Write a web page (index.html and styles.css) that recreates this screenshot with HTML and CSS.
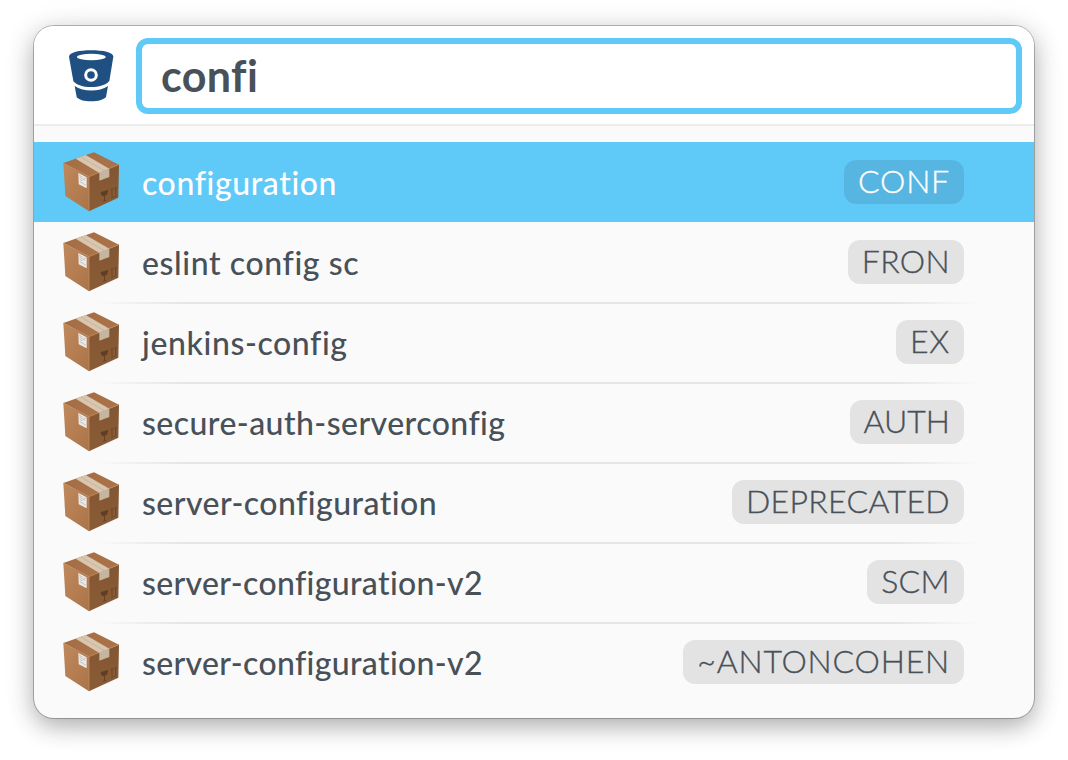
FILE: index.html
```html
<!DOCTYPE html>
<html lang="en">
<head>
<meta charset="utf-8">
<title>Repository search</title>
<link rel="stylesheet" href="styles.css">
</head>
<body>
<svg class="defs" width="0" height="0" aria-hidden="true">
  <defs>
    <linearGradient id="left" x1="0" y1="0" x2="1" y2="1"><stop offset="0" stop-color="#c0895c"/><stop offset="1" stop-color="#aa7449"/></linearGradient>
    <linearGradient id="right" x1="0" y1="0" x2="0" y2="1"><stop offset="0" stop-color="#835632"/><stop offset="1" stop-color="#8a5c36"/></linearGradient>
    <linearGradient id="top" x1="0" y1="0" x2="1" y2="1"><stop offset="0" stop-color="#a36c42"/><stop offset="1" stop-color="#ac754b"/></linearGradient>
    <symbol id="box" viewBox="186 30 174 186">
      <path fill="url(#left)" d="M190 69L267 109V214L196 168Z"/>
      <path fill="url(#right)" d="M267 109L357 74L355 173L267 214Z"/>
      <path fill="url(#top)" d="M190 69L282 37L357 74L267 110Z"/>
      <path fill="none" stroke="#c39167" stroke-width="2" d="M191 70L267 110L356 74M267 110V211"/>
      <path fill="#d8c6b0" d="M227 56L257 45L328 86L298 99Z"/>
      <path fill="none" stroke="#c2ab90" stroke-width="2" d="M242 51L313 92"/>
      <path fill="#c6b5a0" d="M298 98L328 86V111L298 122Z"/>
      <path fill="#ecebe8" d="M235 99L260 112V145L236 133Z"/>
      <path fill="none" stroke="#adaeae" stroke-width="2" d="M238 106L247 111M238 112L256 121M239 119L248 123M239 125L257 135M251 113L257 116"/>
      <path fill="#5f3e25" d="M302 157L324 149Q324 164 314.500 168V180L320 181L308 186L312 181V169Q303 169 302 157Z"/>
      <path fill="none" stroke="#664429" stroke-width="2.500" d="M333 174L350 167M336 169V146M347 165V142M333 150L336 145L339 148M344 146L347 141L350 144"/>
    </symbol>
  </defs>
</svg>
<main class="window">
  <header class="header">
    <svg class="logo" viewBox="144 117 141 159" aria-hidden="true">
      <path fill="#205081" d="M147 140C148 127 178 121 214 121S279 127 280 140L268 213C257 225 237 231 213 231S170 225 160 213Z"/>
      <ellipse cx="214" cy="141" rx="43" ry="9.500" fill="#fff"/>
      <circle cx="213" cy="195" r="16" fill="none" stroke="#fff" stroke-width="9"/>
      <path fill="#205081" d="M164 228C190 246 238 246 264 228L258 261C251 269 234 274 213 274S176 269 170 261Z"/>
    </svg>
    <div class="search">confi</div>
  </header>
  <ul class="results">
    <li class="row selected"><svg class="box"><use href="#box"/></svg><span class="name">configuration</span><span class="tag wide">CONF</span></li>
    <li class="row"><svg class="box"><use href="#box"/></svg><span class="name">eslint config sc</span><span class="tag loose">FRON</span></li>
    <li class="row ruled"><svg class="box"><use href="#box"/></svg><span class="name">jenkins-config</span><span class="tag wide">EX</span></li>
    <li class="row ruled"><svg class="box"><use href="#box"/></svg><span class="name snug">secure-auth-serverconfig</span><span class="tag">AUTH</span></li>
    <li class="row ruled"><svg class="box"><use href="#box"/></svg><span class="name snug">server-configuration</span><span class="tag loose">DEPRECATED</span></li>
    <li class="row ruled"><svg class="box"><use href="#box"/></svg><span class="name tight">server-configuration-v2</span><span class="tag loose">SCM</span></li>
    <li class="row ruled"><svg class="box"><use href="#box"/></svg><span class="name tight">server-configuration-v2</span><span class="tag wide">~ANTONCOHEN</span></li>
  </ul>
</main>
</body>
</html>
```
FILE: styles.css
```css
* { box-sizing: border-box; }
body {
  margin: 0;
  padding: 26px 34px 0;
  height: 760px;
  overflow: hidden;
  background: #fff;
  color: #485058;
  font-family: Lato, "Open Sans", sans-serif;
}
.defs { display: block; }
.window {
  width: 1000px;
  height: 692px;
  border-radius: 20px;
  overflow: hidden;
  background: #fafafa;
  box-shadow: 0 0 0 1px rgba(0,0,0,.25), 0 8px 24px rgba(0,0,0,.3), 0 2px 40px rgba(0,0,0,.06);
}
.header {
  display: flex;
  align-items: flex-start;
  height: 100px;
  padding: 12px 12px 0 34px;
  background: #fff;
  border-bottom: 2px solid #ececec;
}
.logo { width: 47px; height: 53px; margin: 11px 21px 0 0; }
.search {
  flex: 1;
  height: 76px;
  padding-left: 19px;
  border: 6px solid #5fc9f8;
  border-radius: 12px;
  font-size: 43px;
  font-weight: 700;
  line-height: 64px;
  letter-spacing: .4px;
  font-variant-ligatures: none;
}
.results { list-style: none; margin: 0; padding: 16px 0 0; }
.row {
  display: flex;
  align-items: flex-start;
  height: 80px;
  padding: 0 70px 0 28px;
}
.selected { background: #5fc9f8; }
.selected .name, .selected .tag { color: #fff; }
.ruled {
  background: linear-gradient(90deg, transparent 60px, #e5e5e5 150px, #e5e5e5 860px, transparent 945px) 0 0 / 100% 2px no-repeat;
}
.box { width: 58px; height: 62px; margin: 8px 22px 0 0; }
.name {
  flex: 1;
  font-size: 32px;
  font-weight: 500;
  line-height: 40px;
  padding-top: 21px;
  letter-spacing: .6px;
  white-space: nowrap;
}
.snug { letter-spacing: .45px; }
.tight { letter-spacing: .34px; }
.tag {
  height: 44px;
  margin-top: 18px;
  padding: 0 14px;
  border-radius: 12px;
  background: rgba(0,0,0,.09);
  font-size: 32px;
  font-weight: 300;
  line-height: 42px;
  -webkit-text-stroke: .35px currentColor;
}
.loose { letter-spacing: .35px; }
.wide { letter-spacing: .8px; }
```
